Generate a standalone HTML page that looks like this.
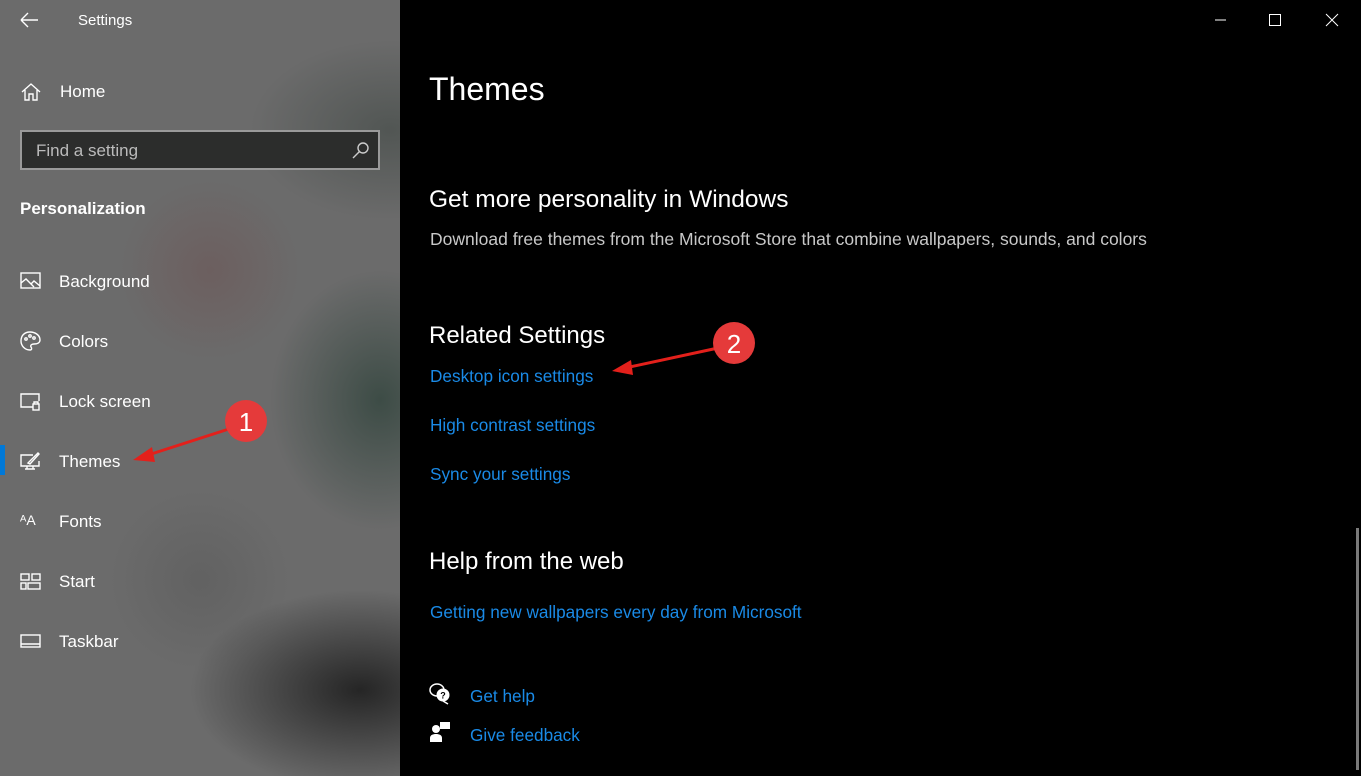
<!DOCTYPE html>
<html><head><style>
*{margin:0;padding:0;box-sizing:border-box}
body{width:1361px;height:776px;overflow:hidden;background:#000;font-family:"Segoe UI","Liberation Sans",sans-serif;position:relative}
#side{position:absolute;left:0;top:0;width:400px;height:776px;background:
radial-gradient(ellipse 90px 90px at 210px 270px,rgba(110,80,80,.45),transparent),
radial-gradient(ellipse 110px 130px at 380px 400px,rgba(30,55,45,.6),transparent),
radial-gradient(ellipse 140px 90px at 390px 130px,rgba(50,60,55,.45),transparent),
radial-gradient(ellipse 170px 100px at 360px 690px,rgba(20,20,20,.8),transparent),
radial-gradient(ellipse 90px 90px at 200px 580px,rgba(80,80,80,.35),transparent),
#6b6b6b;color:#fff}
.t{position:absolute;white-space:nowrap}
.nav{font-size:17px;color:#fff}
.ic{position:absolute;stroke:#fff;fill:none;stroke-width:1.4}
#search{position:absolute;left:20px;top:130px;width:360px;height:40px;border:2px solid #9a9a9a;background:#2c2d2c}
.link{color:#1a8ae6;font-size:17px}
.h{color:#fff}
</style></head><body>
<div id="side">
<svg class="ic" style="left:20px;top:12px" width="20" height="16"><path d="M1 8H18M1 8L8 1M1 8L8 15"/></svg>
<div class="t" style="left:78px;top:12px;font-size:15px">Settings</div>
<svg class="ic" style="left:21px;top:82px" width="20" height="20"><path d="M1 10L10 2L19 10M4 8V18H8V12H12V18H16V8"/></svg>
<div class="t nav" style="left:60px;top:82px">Home</div>
<div id="search"><div class="t" style="left:14px;top:9px;font-size:17px;color:#bbb">Find a setting</div>
<svg class="ic" style="left:330px;top:10px;stroke:#ccc" width="18" height="18"><circle cx="11" cy="6" r="5"/><path d="M7.5 9.5L1 16"/></svg></div>
<div class="t" style="left:20px;top:199px;font-size:17px;font-weight:bold">Personalization</div>
<svg class="ic" style="left:20px;top:272px" width="21" height="18"><rect x="1" y="1" width="19" height="15"/><path d="M1 11L6 7L14 15M11 12L14 9L20 14"/></svg>
<div class="t nav" style="left:59px;top:272px">Background</div>
<svg class="ic" style="left:20px;top:331px" width="21" height="20"><path d="M10 1C4 1 1 5 1 10C1 15 5 19 10 19C12 19 12 17 11 16C10 14 12 13 14 13C17 13 20 12 20 9C20 4 15 1 10 1Z"/><circle cx="6" cy="8" r="1.2"/><circle cx="10" cy="5" r="1.2"/><circle cx="14" cy="7" r="1.2"/></svg>
<div class="t nav" style="left:59px;top:332px">Colors</div>
<svg class="ic" style="left:20px;top:393px" width="21" height="18"><path d="M13 14H1V1H19V8"/><rect x="13" y="11" width="6" height="6"/><path d="M14 11V9H18V11"/></svg>
<div class="t nav" style="left:59px;top:392px">Lock screen</div>
<div style="position:absolute;left:0;top:445px;width:5px;height:30px;background:#0078d7"></div>
<svg class="ic" style="left:20px;top:452px" width="21" height="19"><path d="M13 3H1V14H19V9M7 14V17H13V14M5 17H15M8 11L18 1L19 2L10 12Z"/></svg>
<div class="t nav" style="left:59px;top:452px">Themes</div>
<div class="t nav" style="left:20px;top:512px;font-size:14px">ᴬA</div>
<div class="t nav" style="left:59px;top:512px">Fonts</div>
<svg class="ic" style="left:20px;top:573px" width="21" height="17"><rect x="1" y="1" width="8" height="6"/><rect x="12" y="1" width="8" height="6"/><rect x="1" y="10" width="5" height="6"/><rect x="8" y="10" width="12" height="6"/></svg>
<div class="t nav" style="left:59px;top:572px">Start</div>
<svg class="ic" style="left:20px;top:634px" width="21" height="15"><rect x="1" y="1" width="19" height="12"/><path d="M1 10H20"/></svg>
<div class="t nav" style="left:59px;top:632px">Taskbar</div>
</div>
<svg style="position:absolute;left:0;top:0" width="1361" height="776">
<path d="M232 428L145 456" stroke="#e3201b" stroke-width="3"/>
<path d="M133 460L152 447L155 462Z" fill="#e3201b"/>
<circle cx="246" cy="421" r="21" fill="#e53a3a"/>
<text x="246" y="431" fill="#fff" font-size="26" font-family="Liberation Sans" text-anchor="middle">1</text>
<path d="M718 348L625 368" stroke="#e3201b" stroke-width="3"/>
<path d="M612 371L631 360L633 375Z" fill="#e3201b"/>
<circle cx="734" cy="343" r="21" fill="#e53a3a"/>
<text x="734" y="353" fill="#fff" font-size="26" font-family="Liberation Sans" text-anchor="middle">2</text>
<path d="M1215 20H1226" stroke="#fff"/>
<rect x="1269.5" y="14.5" width="11" height="11" stroke="#fff" fill="none"/>
<path d="M1326 14L1338 26M1338 14L1326 26" stroke="#fff"/>
<rect x="1356" y="528" width="3" height="242" fill="#7a7a7a"/>
</svg>
<div class="t h" style="left:429px;top:71px;font-size:32px;font-weight:300">Themes</div>
<div class="t h" style="left:429px;top:186px;font-size:24.5px">Get more personality in Windows</div>
<div class="t" style="left:430px;top:229px;font-size:17.5px;color:#c8c8c8">Download free themes from the Microsoft Store that combine wallpapers, sounds, and colors</div>
<div class="t h" style="left:429px;top:322px;font-size:24px">Related Settings</div>
<div class="t link" style="left:430px;top:366px;font-size:17.2px">Desktop icon settings</div>
<div class="t link" style="left:430px;top:415px;font-size:17.2px">High contrast settings</div>
<div class="t link" style="left:430px;top:464px;font-size:17.2px">Sync your settings</div>
<div class="t h" style="left:429px;top:548px;font-size:24px">Help from the web</div>
<div class="t link" style="left:430px;top:602px;font-size:17.2px">Getting new wallpapers every day from Microsoft</div>
<svg style="position:absolute;left:429px;top:683px" width="24" height="22"><ellipse cx="8" cy="7" rx="7" ry="6" fill="none" stroke="#fff" stroke-width="1.5"/><circle cx="14" cy="12" r="6.5" fill="#fff"/><path d="M14 18L19 21" stroke="#fff" stroke-width="1.5"/><text x="14" y="15.5" font-size="9" font-weight="bold" text-anchor="middle" font-family="Liberation Sans">?</text></svg>
<div class="t link" style="left:470px;top:686px;font-size:17.2px">Get help</div>
<svg style="position:absolute;left:430px;top:721px" width="22" height="22"><rect x="10" y="1" width="10" height="7" fill="#fff"/><circle cx="6" cy="8" r="4" fill="#fff"/><path d="M0 21V17C0 14 3 13 6 13C9 13 12 14 12 17V21Z" fill="#fff"/></svg>
<div class="t link" style="left:470px;top:725px;font-size:17.2px">Give feedback</div>
</body></html>
